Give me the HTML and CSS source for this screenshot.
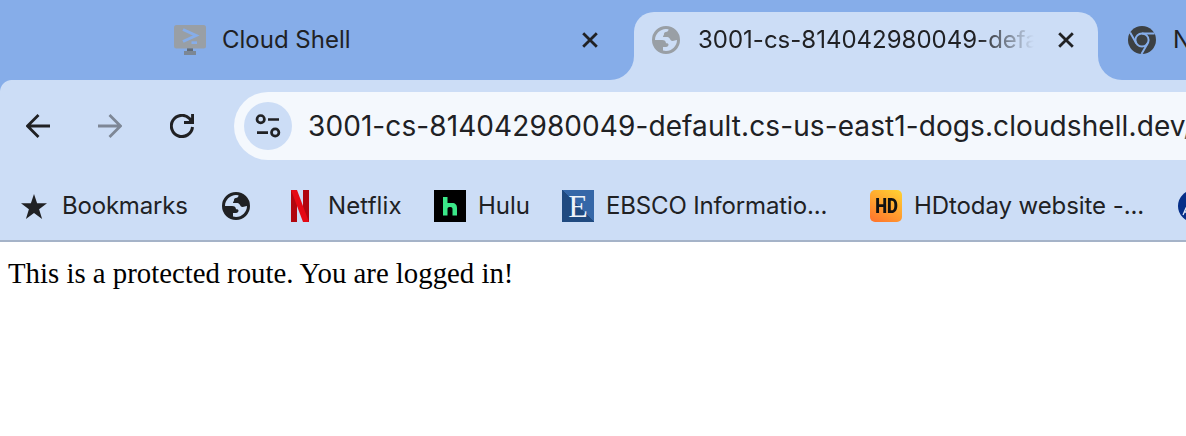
FILE: index.html
```html
<!DOCTYPE html>
<html lang="en">
<head>
<meta charset="utf-8">
<title>Browser window</title>
<link rel="stylesheet" href="styles.css">
</head>
<body>
<svg width="0" height="0" class="defs">
  <symbol id="globe" viewBox="0 0 28 28">
    <path fill-rule="evenodd" d="M14 0a14 14 0 1 0 0 28a14 14 0 0 0 0-28ZM3 14C3 8 8 3 14 3L16.500 3.200C16.500 5 15.500 6 13.800 6C12.500 6 12 7 12 8.200C12 9.500 11 9.200 11 11H15.500C18 11 18 15 20.500 15C22.500 15 23 14 25 14C25 20 20 25 14 25L11 24.600V21H14C15.500 21 16.500 20 16.500 18.600C16.500 17.500 15.500 17.300 14 17.300C14 15.200 12.500 14 10 14Z"/>
  </symbol>
  <symbol id="close" viewBox="0 0 16 16">
    <path d="M1.200 1.200L14.800 14.800M14.800 1.200L1.200 14.800" fill="none" stroke="currentColor" stroke-width="2.800"/>
  </symbol>
</svg>
<header class="tabs">
  <div class="tab first">
    <svg class="shell" viewBox="0 0 32 32"><rect y="1" width="32" height="23.500" rx="2.500" fill="#999fa5"/><path d="M13 24.500h6V27h3v4H10v-4h3z" fill="#7c8794"/><path d="M13 24.500h6V27h-6z" fill="#606b78"/><path d="M9 5.500L22 11.500L9 17.500" fill="none" stroke="#86ade9" stroke-width="3"/><path d="M17.500 17.300h5.500v2.700h-5.500z" fill="#86ade9"/></svg>
    <span class="label cloud">Cloud Shell</span>
    <svg class="x"><use href="#close"/></svg>
  </div>
  <div class="tab active">
    <svg class="globe muted"><use href="#globe"/></svg>
    <span class="label fade">3001-cs-814042980049-default</span>
    <svg class="x"><use href="#close"/></svg>
  </div>
  <div class="tab last">
    <svg class="chrome" viewBox="0 0 28 28"><circle cx="14" cy="14" r="14"/><g fill="none" stroke="#86ade9" stroke-width="2"><circle cx="14" cy="14" r="6.600"/><path d="M14 7.400H26.500M8.300 17.300L2.100 6.500M19.700 17.300L13.500 28"/></g></svg>
    <span class="label">New Tab</span>
  </div>
</header>
<nav class="toolbar">
  <svg class="nav" viewBox="0 0 24 24"><path d="M24 12H2M12.500 1L1.500 12L12.500 23"/></svg>
  <svg class="nav forward" viewBox="0 0 24 24"><path d="M0 12H22M11.500 1L22.500 12L11.500 23"/></svg>
  <svg class="nav reload" viewBox="0 0 24 24"><path d="M22.500 13A10.600 10.600 0 1 1 19.500 4.500L22 7.500M14 8.500H22.600V0"/><path class="tip" d="M17 8.500H22.600V3.500Z"/></svg>
  <div class="omnibox">
    <span class="site"><svg viewBox="0 0 26 24"><g fill="none" stroke="#202124" stroke-width="2.700"><circle cx="5.700" cy="5.200" r="3.700"/><circle cx="20.200" cy="18.500" r="3.700"/><path d="M13 5.500H24M2 18.700H13"/></g></svg></span>
    <span class="url">3001-cs-814042980049-default.cs-us-east1-dogs.cloudshell.dev<i>/</i></span>
  </div>
</nav>
<nav class="bookmarks">
  <svg class="star" viewBox="0 0 26 25"><path d="M13 0L16.100 9.300H26L18.100 15.200L21.100 25L13 19.100L4.900 25L7.900 15.200L0 9.300H9.900Z"/></svg>
  <span class="label b1">Bookmarks</span>
  <svg class="globe world"><use href="#globe"/></svg>
  <svg class="netflix" viewBox="0 0 18 32"><path d="M0 0H6V32H0ZM12 0H18V32H12Z" fill="#b1060f"/><path d="M0 0H6L18 32H12Z" fill="#e50914"/></svg>
  <span class="label b2">Netflix</span>
  <svg class="hulu" viewBox="0 0 32 32"><path d="M0 0h32v32H0z"/><path d="M9 7h4.500v6H18c3.500 0 5 2 5 5v7.500h-4.500V19c0-1.300-.700-2-2-2h-1c-1.300 0-2 .700-2 2v6.500H9z" fill="#3be889"/></svg>
  <span class="label b3">Hulu</span>
  <span class="ebsco">E</span>
  <span class="label b4">EBSCO Informatio...</span>
  <span class="hd"><b>HD</b></span>
  <span class="label b5">HDtoday website -...</span>
  <svg class="round" viewBox="0 0 32 32"><circle cx="16" cy="16" r="16" fill="#062f88"/><path d="M5 25L8 18H12M6 22H12" stroke="#dce7fa" fill="none" stroke-width="1.300"/></svg>
</nav>
<main><span class="message">This is a protected route. You are logged in!</span></main>
</body>
</html>
```
FILE: styles.css
```css
* { box-sizing: border-box; }
body { margin: 0; width: 1186px; height: 436px; overflow: hidden; background: #fff; color: #202124; font-family: Inter, sans-serif; }
svg { flex: none; display: block; }
.defs { position: absolute; }
.tabs { display: flex; height: 80px; background: linear-gradient(#86ade9 0 40px, #ccddf6 40px); }
.tab { display: flex; align-items: center; height: 80px; background: #86ade9; overflow: hidden; flex: none; }
.label { font-size: 24px; line-height: 32px; white-space: nowrap; flex: none; }
.first { width: 634px; padding-left: 174px; border-bottom-right-radius: 24px; }
.active { width: 464px; height: 68px; margin-top: 12px; padding: 0 0 12px 18px; background: #ccddf6; border-radius: 20px 20px 0 0; }
.last { width: 88px; padding-left: 30px; border-bottom-left-radius: 24px; }
.shell { width: 32px; height: 32px; margin-right: 16px; }
.cloud { width: 360px; }
.x { width: 16px; height: 16px; }
.globe { width: 28px; height: 28px; fill: currentColor; }
.muted { color: #999fa5; }
.fade { width: 340px; margin: 0 20px 0 18px; overflow: hidden; mask-image: linear-gradient(90deg, #000 280px, transparent 336px); }
.chrome { width: 28px; height: 28px; margin-right: 17px; fill: #3c4043; }
.toolbar { display: flex; align-items: center; height: 92px; padding-left: 26px; background: radial-gradient(circle at 12px 12px, #ccddf6 11.5px, #86ade9 12.5px) 0 0 / 12px 12px no-repeat, #ccddf6; }
.nav { width: 24px; height: 24px; margin-right: 48px; fill: none; stroke: #202124; stroke-width: 2.8; }
.forward { opacity: .45; }
.reload { stroke-width: 3; }
.tip { fill: #202124; stroke: none; }
.omnibox { display: flex; align-items: center; flex: none; width: 980px; height: 68px; margin-left: -8px; padding-left: 10px; background: #f4f8fd; border-radius: 34px 0 0 34px; }
.site { display: flex; align-items: center; justify-content: center; width: 48px; height: 48px; margin-right: 16px; background: #ccddf6; border-radius: 50%; }
.site svg { width: 26px; height: 24px; }
.url { font-size: 28px; line-height: 36px; letter-spacing: .09px; white-space: nowrap; }
.url i { font-style: normal; color: #5f6368; }
.bookmarks { display: flex; align-items: center; height: 70px; padding: 0 0 0 21px; background: #ccddf6; border-bottom: 2px solid #a5b3c8; }
.star { width: 26px; height: 25px; margin-right: 15px; fill: #202124; }
.b1 { width: 160px; letter-spacing: -.2px; }
.world { margin-right: 41px; }
.netflix { width: 18px; height: 32px; margin-right: 19px; }
.b2 { width: 106px; letter-spacing: .1px; }
.hulu { width: 32px; height: 32px; margin-right: 12px; }
.b3 { width: 84px; }
.ebsco { flex: none; width: 32px; height: 32px; margin-right: 12px; background: linear-gradient(45deg, #204a80 50%, #3567a8 50%); color: #eef3fa; font: 32px/32px "Liberation Serif", serif; text-align: center; }
.b4 { width: 264px; letter-spacing: -.15px; }
.hd { flex: none; width: 32px; height: 32px; margin-right: 12px; border-radius: 5px; background: linear-gradient(30deg, #ff702c, #ffd432); color: #111; font: 700 20px/32px Roboto, sans-serif; text-align: center; }
.hd b { display: inline-block; margin: 0 -4px; transform: scaleX(.84); }
.b5 { width: 264px; letter-spacing: -.08px; }
.round { width: 32px; height: 32px; }
main { padding: 13px 8px; }
.message { font: 28.8px/36px "Liberation Serif", serif; color: #000; white-space: nowrap; }
```
